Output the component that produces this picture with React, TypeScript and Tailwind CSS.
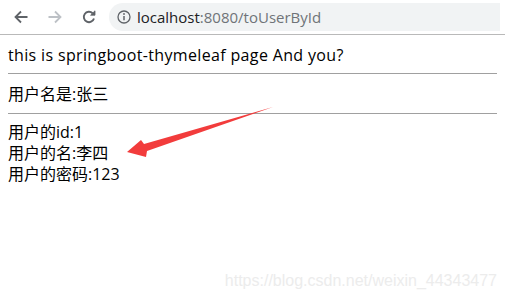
import React from 'react';

const font = { fontFamily: '"Open Sans", "Noto Sans CJK SC", sans-serif' };

const BackIcon = ({ className }: { className?: string }) => (
  <svg viewBox="0 0 16 16" className={className} fill="none" stroke="currentColor" strokeWidth="1.8">
    <path d="M14.5 8H2.5M8 2.5L2.5 8L8 13.5" />
  </svg>
);

const ForwardIcon = ({ className }: { className?: string }) => (
  <svg viewBox="0 0 16 16" className={className} fill="none" stroke="currentColor" strokeWidth="1.8">
    <path d="M1.5 8H13.5M8 2.5L13.5 8L8 13.5" />
  </svg>
);

const ReloadIcon = ({ className }: { className?: string }) => (
  <svg viewBox="0 0 16 16" className={className} fill="none" stroke="currentColor" strokeWidth="1.9">
    <path d="M13 9.5A5.2 5.2 0 1 1 11.6 4.2" />
    <path d="M14 1.8V6.2H9.6Z" fill="currentColor" strokeWidth="0.8" />
  </svg>
);

const InfoIcon = () => (
  <svg viewBox="0 0 14 14" className="w-[14px] h-[14px] text-[#5f6368]" fill="none" stroke="currentColor">
    <circle cx="7" cy="7" r="6" strokeWidth="1.3" />
    <path d="M7 6v4.2" strokeWidth="1.5" />
    <circle cx="7" cy="4" r="0.9" fill="currentColor" stroke="none" />
  </svg>
);

export default function App() {
  return (
    <div className="relative w-[505px] h-[305px] bg-white overflow-hidden" style={font}>
      {/* Browser toolbar */}
      <div className="h-[35px] flex items-center border-b border-[#b9b9b9] bg-white">
        <div className="flex items-center pl-[13px] gap-[18px] text-[#5f6368]">
          <BackIcon className="w-[16px] h-[16px]" />
          <ForwardIcon className="w-[16px] h-[16px] text-[#bdc1c6]" />
          <ReloadIcon className="w-[16px] h-[16px]" />
        </div>
        <div className="ml-[12px] mr-[5px] flex-1 h-[28px] rounded-l-full bg-[#f1f3f4] flex items-center pl-[8px] gap-[6px]">
          <InfoIcon />
          <span className="text-[15px]">
            <span className="text-[#202124]">localhost</span>
            <span className="text-[#6f7378]">:8080/toUserById</span>
          </span>
        </div>
      </div>

      {/* Page body */}
      <div className="px-[8px] text-[16px] text-black leading-[21px]">
        <p className="mt-[10px] tracking-[0.35px]">this is springboot-thymeleaf page And you?</p>
        <hr className="mt-[7px] border-t border-[#a0a0a0]" />
        <p className="mt-[10px]">用户名是:张三</p>
        <hr className="mt-[8px] border-t border-[#a0a0a0]" />
        <div className="mt-[8px] flex flex-col">
          <span>用户的id:1</span>
          <span>用户的名:李四</span>
          <span>用户的密码:123</span>
        </div>
      </div>

      {/* Annotation arrow */}
      <svg className="absolute inset-0 pointer-events-none" width="505" height="305">
        <polygon
          points="273,107 147,151 146,157 127,152 141,140 144,144"
          fill="#f23c3c"
        />
      </svg>

      {/* Watermark */}
      <span
        className="absolute right-[8px] bottom-[12px] text-[16px] text-[#ececec]"
        style={{ fontFamily: '"Liberation Sans", Arial, sans-serif' }}
      >
        https://blog.csdn.net/weixin_44343477
      </span>
    </div>
  );
}
